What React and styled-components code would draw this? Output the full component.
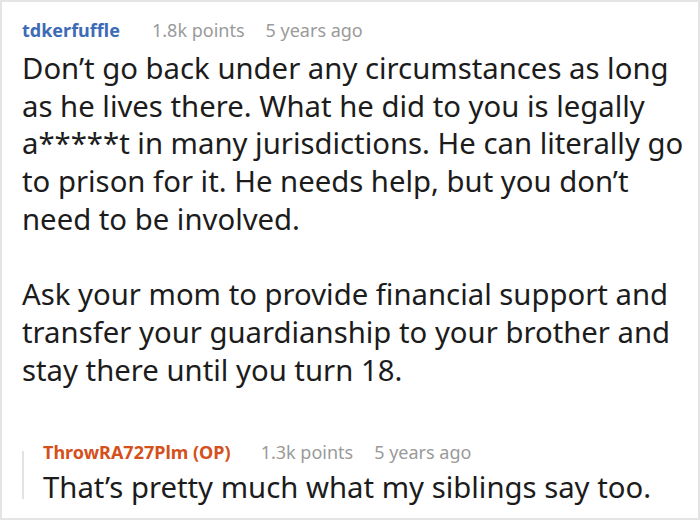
import styled, { createGlobalStyle } from "styled-components";

const Global = createGlobalStyle`
body {
margin: 0;
background: #ffffff;
font-family: "Noto Sans", "Open Sans", sans-serif;
}
`

const Frame = styled.div`
box-sizing: border-box;
width: 700px;
height: 520px;
border: 2px solid #e4e4e4;
padding: 16px 20px 0 20px;
overflow: hidden;
`

const Meta = styled.div`
display: flex;
align-items: baseline;
font-size: 18px;
line-height: 24px;
`

const User = styled.span`
font-weight: 700;
color: ${p => p.$color};
margin-right: ${p => p.$gap}px;
`

const Stat = styled.span`
color: #9a9a9a;
margin-right: ${p => p.$gap || 0}px;
`

const Body = styled.p`
margin: ${p => p.$top || 0}px 0 0 0;
font-size: 29.3px;
line-height: 37.7px;
color: #1c1c1c;
white-space: pre;
`

const Reply = styled.div`
position: relative;
margin-top: 51px;
padding-left: 21px;
&::before {
content: "";
position: absolute;
left: 0;
top: 11px;
bottom: 8px;
width: 2px;
background: #e2e2e2;
}
`

const App = () => {
    return (
        <Frame>
            <Global />
            <Meta>
                <User $color="#3d6bb5" $gap={32}>tdkerfuffle</User>
                <Stat $gap={21}>1.8k points</Stat>
                <Stat>5 years ago</Stat>
            </Meta>
            <Body $top={8}>{`Don’t go back under any circumstances as long
as he lives there. What he did to you is legally
a*****t in many jurisdictions. He can literally go
to prison for it. He needs help, but you don’t
need to be involved.

Ask your mom to provide financial support and
transfer your guardianship to your brother and
stay there until you turn 18.`}</Body>
            <Reply>
                <Meta>
                    <User $color="#d4501c" $gap={30}>ThrowRA727Plm (OP)</User>
                    <Stat $gap={21}>1.3k points</Stat>
                    <Stat>5 years ago</Stat>
                </Meta>
                <Body $top={5}>That’s pretty much what my siblings say too.</Body>
            </Reply>
        </Frame>
    )
}

export default App
